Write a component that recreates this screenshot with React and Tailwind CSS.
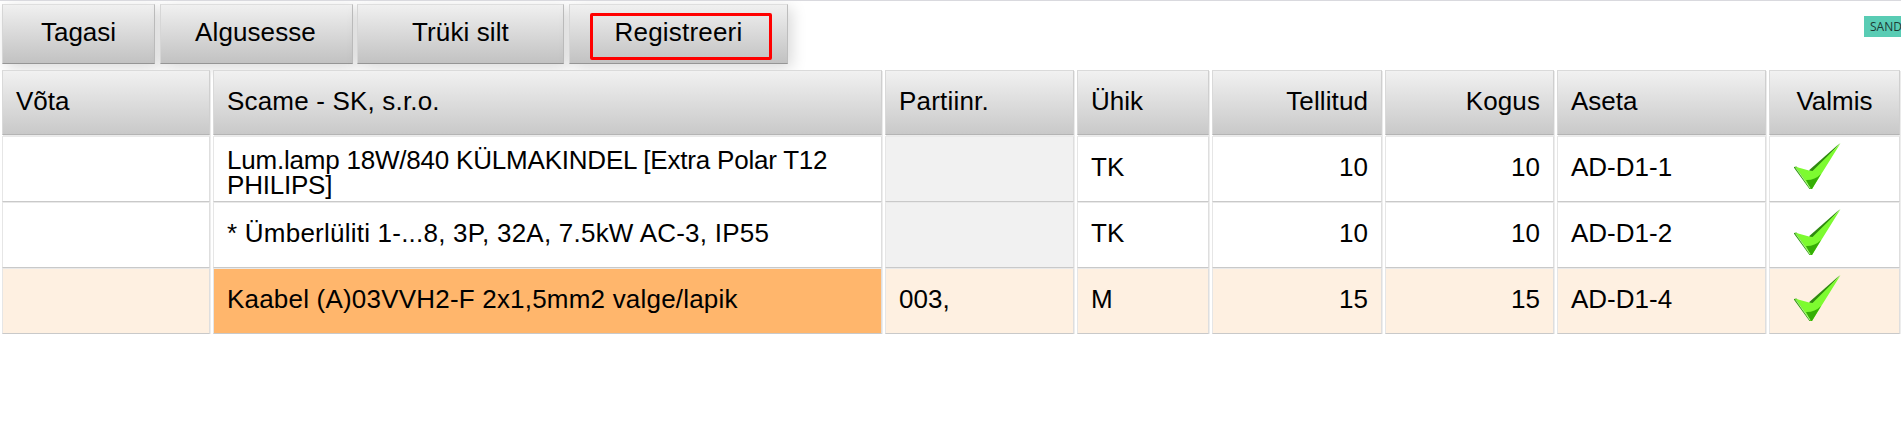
const COLS = "grid grid-cols-[208px_669px_189px_132px_170px_169px_209px_131px] gap-x-[3px]";

const buttons = [
  { label: "Tagasi", cls: "w-[153px] mr-[5px]" },
  { label: "Algusesse", cls: "w-[193px] mr-[4px] pr-[2px] tracking-[0.1px]" },
  { label: "Trüki silt", cls: "w-[207px] mr-[5px] tracking-[0.1px]" },
  { label: "Registreeri", cls: "w-[219px] tracking-[0.2px]", marked: true },
];

const headers = [
  { label: "Võta", cls: "justify-start" },
  { label: "Scame - SK, s.r.o.", cls: "justify-start tracking-[0.18px]" },
  { label: "Partiinr.", cls: "justify-start tracking-[0.2px]" },
  { label: "Ühik", cls: "justify-start" },
  { label: "Tellitud", cls: "justify-end tracking-[0.1px]" },
  { label: "Kogus", cls: "justify-end tracking-[0.1px]" },
  { label: "Aseta", cls: "justify-start" },
  { label: "Valmis", cls: "justify-center" },
];

const rows = [
  { name: "Lum.lamp 18W/840 KÜLMAKINDEL [Extra Polar T12 PHILIPS]", nameCls: "tracking-[-0.21px] pt-[11px]", batch: "", unit: "TK", ordered: 10, qty: 10, place: "AD-D1-1" },
  { name: "* Ümberlüliti 1-...8, 3P, 32A, 7.5kW AC-3, IP55", nameCls: "tracking-[0.23px]", batch: "", unit: "TK", ordered: 10, qty: 10, place: "AD-D1-2" },
  { name: "Kaabel (A)03VVH2-F 2x1,5mm2 valge/lapik", nameCls: "tracking-[0.2px]", batch: "003,", unit: "M", ordered: 15, qty: 15, place: "AD-D1-4", active: true },
];

function Check() {
  return (
    <svg className="ml-[24px] h-[48px] w-[48px]" viewBox="0.5 0.5 48 48">
      <path d="M15.5 27.8 L46.5 0.5 L20 31 Z" fill="#2f8a10" />
      <path d="M0 24.5 L3 24 L18.5 46.5 L16 46.5 Z" fill="#2c9a0c" />
      <path d="M2 24.3 L15.5 28 L19 28.5 L47 0.8 L18.5 46.5 L17 46.5 Z" fill="#7dfb30" />
      <path d="M12.5 37.6 Q21 38 27.5 31.5 L18.5 46.5 L17.3 46.5 Z" fill="#35ae06" />
      <path d="M2 25 L16.5 45.5" stroke="#c6f7ae" strokeWidth="0.8" fill="none" />
    </svg>
  );
}

function Cell({ children, cls }) {
  return (
    <div className={"flex h-[66px] items-center border border-t-[#e9e9e9] border-r-[#dedede] border-b-[#c9c9c9] border-l-[#e6e6e6] px-[13px] leading-[25px] shadow-[1px_0_0_#ededed] " + cls}>
      {children}
    </div>
  );
}

export default function App() {
  return (
    <div className="h-[429px] w-[1901px] overflow-hidden border-t border-[#d9d9de] bg-white pl-[2px] font-['Liberation_Sans',Arial,sans-serif] text-[26px] text-black">
      <div className="flex h-[69px] items-start pt-[3px]">
        {buttons.map((b) => (
          <div
            key={b.label}
            className={"relative flex h-[60px] items-center justify-center border border-t-[#dedede] border-r-[#bdbdbd] border-b-[#959595] border-l-[#d6d6d6] bg-linear-to-b from-[#f0f0f0] to-[#c2c2c2] pb-[3px] shadow-[4px_4px_14px_rgba(0,0,0,0.15)] " + b.cls}
          >
            {b.label}
            {b.marked && <div className="absolute top-[8px] left-[20px] h-[47px] w-[182px] rounded-[2px] border-3 border-[#ff0000]" />}
          </div>
        ))}
        <div className="mt-[12px] ml-auto h-[21px] w-[37px] overflow-hidden bg-[#59ccb4] pl-[6px] font-['Open_Sans',sans-serif] text-[12px] leading-[22px] whitespace-nowrap text-[#1d3b35]">
          SAND
        </div>
      </div>
      <div className={COLS + " relative"}>
        {headers.map((h) => (
          <div
            key={h.label}
            className={"mb-px flex h-[65px] items-center border border-t-[#dadada] border-r-[#cfcfcf] border-b-[#b4b4b4] border-l-[#d9d9d9] bg-linear-to-b from-[#f1f1f1] to-[#c9c9c9] px-[13px] pb-[2px] shadow-[1px_1px_0_#ebebeb] " + h.cls}
          >
            {h.label}
          </div>
        ))}
      </div>
      {rows.map((r) => {
        const bg = r.active ? "bg-[#fef0e1]" : "bg-white";
        const text = " pb-[4px] ";
        return (
          <div key={r.place} className={COLS}>
            <Cell cls={bg} />
            <Cell cls={(r.active ? "bg-[#ffb66c]" : "bg-white") + text + r.nameCls}>{r.name}</Cell>
            <Cell cls={(r.active ? bg : "bg-[#f1f1f1]") + text}>{r.batch}</Cell>
            <Cell cls={bg + text}>{r.unit}</Cell>
            <Cell cls={"justify-end " + bg + text}>{r.ordered}</Cell>
            <Cell cls={"justify-end " + bg + text}>{r.qty}</Cell>
            <Cell cls={bg + text}>{r.place}</Cell>
            <Cell cls={"!px-0 pb-[4px] " + bg}><Check /></Cell>
          </div>
        );
      })}
    </div>
  );
}
